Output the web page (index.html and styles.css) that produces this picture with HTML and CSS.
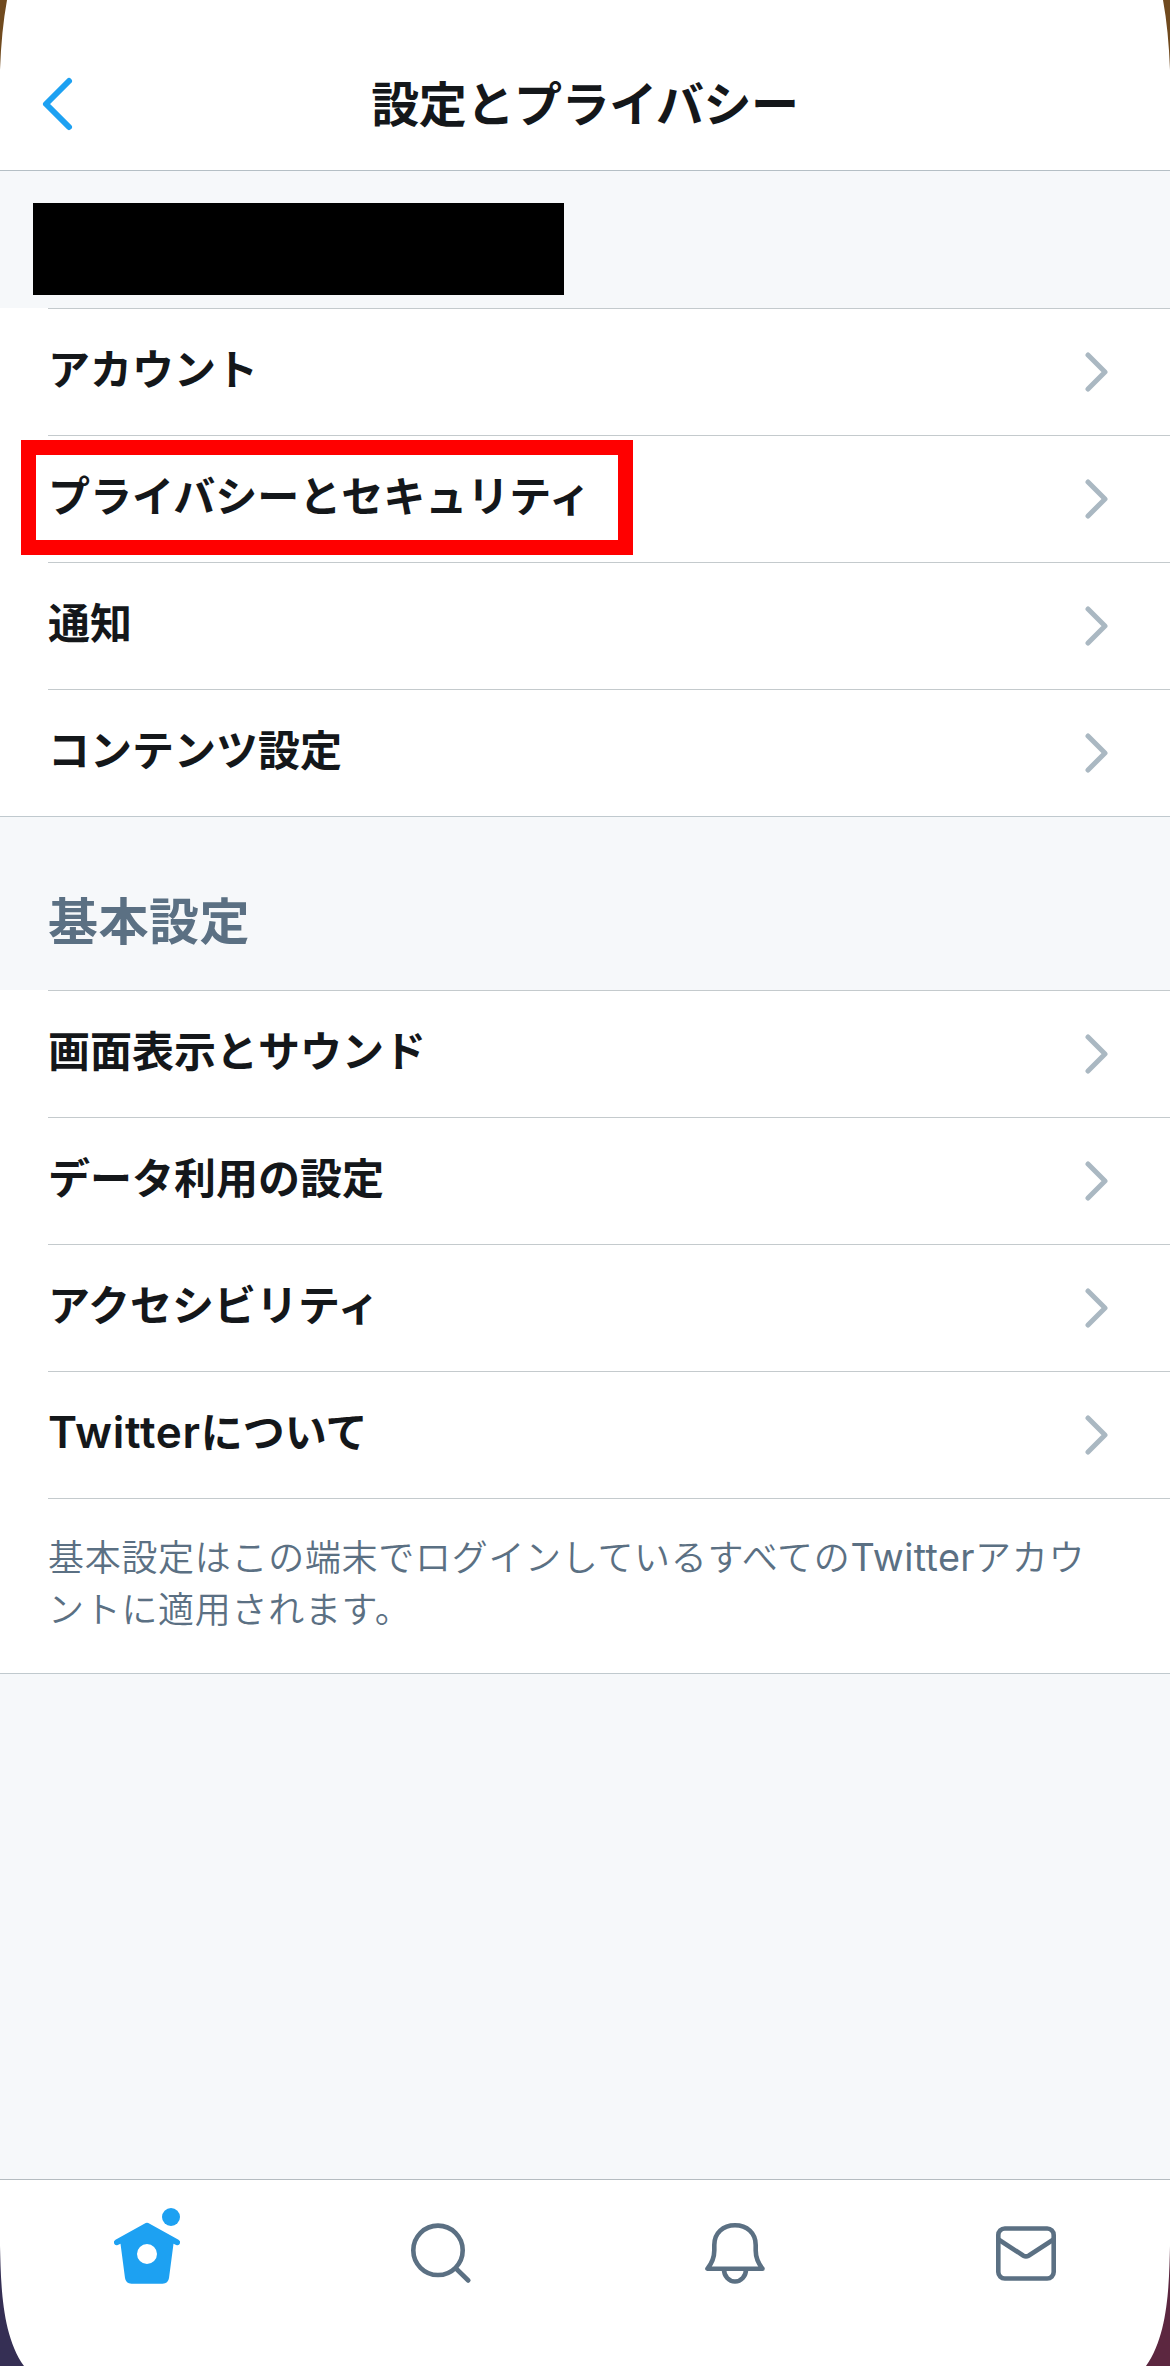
FILE: index.html
```html
<!DOCTYPE html>
<html lang="ja">
<head>
    <meta charset="UTF-8">
    <meta name="viewport" content="width=device-width, initial-scale=1.0">
    <title>設定とプライバシー</title>
    <link rel="stylesheet" href="styles.css">
</head>
<body>
    <header>
        <a href="#" class="back">
            <svg width="40" height="60" viewBox="0 0 40 60"><path d="M29 7L6 30L29 53"/></svg>
        </a>
        <h1>設定とプライバシー</h1>
    </header>

    <main>
        <div class="user"><div class="user-name"></div></div>
        <ul class="list">
            <li><a href="#"><span>アカウント</span><svg class="arrow" viewBox="0 0 24 40"><path d="M3 3L20 20L3 37"/></svg></a></li>
            <li><a href="#"><span class="marked">プライバシーとセキュリティ</span><svg class="arrow" viewBox="0 0 24 40"><path d="M3 3L20 20L3 37"/></svg></a></li>
            <li><a href="#"><span>通知</span><svg class="arrow" viewBox="0 0 24 40"><path d="M3 3L20 20L3 37"/></svg></a></li>
            <li><a href="#"><span>コンテンツ設定</span><svg class="arrow" viewBox="0 0 24 40"><path d="M3 3L20 20L3 37"/></svg></a></li>
        </ul>

        <h2>基本設定</h2>
        <ul class="list">
            <li><a href="#"><span>画面表示とサウンド</span><svg class="arrow" viewBox="0 0 24 40"><path d="M3 3L20 20L3 37"/></svg></a></li>
            <li><a href="#"><span>データ利用の設定</span><svg class="arrow" viewBox="0 0 24 40"><path d="M3 3L20 20L3 37"/></svg></a></li>
            <li><a href="#"><span>アクセシビリティ</span><svg class="arrow" viewBox="0 0 24 40"><path d="M3 3L20 20L3 37"/></svg></a></li>
            <li><a href="#"><span><span class="latin">Twitter</span>について</span><svg class="arrow" viewBox="0 0 24 40"><path d="M3 3L20 20L3 37"/></svg></a></li>
            <li class="note">基本設定はこの端末でログインしているすべての<span class="latin">Twitter</span>アカウ<br>ントに適用されます。</li>
        </ul>
    </main>

    <nav>
        <a href="#" class="active">
            <svg viewBox="0 0 80 80">
                <circle cx="64" cy="12" r="9"/>
                <path fill-rule="evenodd" d="M38.700 18.100Q40 17.300 41.300 18.100L71.500 34.800Q73.700 36.200 73 38.200Q72 40.800 69.200 39.900L66.500 38.700L62 73Q61.200 78.700 55.500 78.700H24.500Q18.800 78.700 18 73L13.500 38.700L10.800 39.900Q8 40.800 7 38.200Q6.300 36.200 8.500 34.800ZM40 39a10 10 0 1 0 0 20a10 10 0 1 0 0-20Z"/>
            </svg>
        </a>
        <a href="#">
            <svg viewBox="0 0 80 80"><circle cx="37" cy="45.300" r="24.700"/><path d="M55 63.500L67.300 75.500"/></svg>
        </a>
        <a href="#">
            <svg viewBox="0 0 80 80"><path d="M12.500 63.700H67.500C63 58 60.700 52.500 60.700 45.500V40C60.700 28 52 20.300 40 20.300S19.300 28 19.300 40V45.500C19.300 52.500 17 58 12.500 63.700ZM29 64.500a11 12 0 0 0 22 0"/></svg>
        </a>
        <a href="#">
            <svg viewBox="0 0 80 80"><rect x="9.300" y="23.500" width="55.400" height="50" rx="6.500"/><path d="M9.500 34.500L34.500 50.700Q37 52.200 39.500 50.700L64.500 34.500"/></svg>
        </a>
    </nav>

    <!-- wallpaper behind the rounded screen corners -->
    <svg class="corner top left" viewBox="0 0 30 150"><path d="M0 0H7Q1.500 30 0 70Z"/></svg>
    <svg class="corner top right" viewBox="0 0 30 150"><path d="M0 0H7Q1.500 30 0 70Z"/></svg>
    <svg class="corner bottom left" viewBox="0 0 30 150"><path d="M0 30C1 65 1 118 24 150H0Z"/></svg>
    <svg class="corner bottom right" viewBox="0 0 30 150"><path d="M0 30C1 65 1 118 24 150H0Z"/></svg>
</body>
</html>
```

FILE: styles.css
```css
html, body {
    height: 100%;
    margin: 0;
    overflow: hidden;
}
body {
    position: relative;
    display: flex;
    flex-direction: column;
    background-color: #f6f8fa;
    color: #14171a;
    font-family: 'Noto Sans CJK JP', sans-serif;
}
a {
    color: inherit;
    text-decoration: none;
}
svg {
    display: block;
    fill: none;
    stroke-linecap: round;
    stroke-linejoin: round;
}
header {
    display: grid;
    grid-template-columns: 120px 1fr 120px;
    align-items: center;
    box-sizing: border-box;
    height: 171px;
    padding-top: 38px;
    background-color: #fff;
    border-bottom: 1px solid #b5bfc5;
}
.back {
    padding-left: 40px;
}
.back svg {
    stroke: #1da1f2;
    stroke-width: 6;
}
h1 {
    margin: 0 0 6px;
    text-align: center;
    font-size: 48px;
    line-height: 60px;
    letter-spacing: -0.4px;
}
main {
    flex: 1;
}
.user {
    box-sizing: border-box;
    height: 137px;
    padding: 32px 33px 0;
}
.user-name {
    width: 531px;
    height: 92px;
    background-color: #000;
}
.list {
    list-style: none;
    margin: 0;
    padding: 0 0 0 48px;
    background-color: #fff;
    border-bottom: 1px solid #c0c9ce;
}
.list li {
    border-top: 1px solid #c4cacd;
}
.list a {
    display: flex;
    justify-content: space-between;
    align-items: center;
    height: 126px;
    padding-right: 61px;
    font-size: 42px;
    font-weight: bold;
}
.list a > span {
    position: relative;
    line-height: 60px;
    margin-bottom: 10px;
}
.arrow {
    width: 24px;
    height: 40px;
    stroke: #aab8c2;
    stroke-width: 5;
}
/* red frame around the row to tap */
.marked::after {
    content: "";
    position: absolute;
    left: -27px;
    top: -24px;
    width: 582px;
    height: 85px;
    border: 15px solid #f00;
}
h2 {
    box-sizing: border-box;
    height: 173px;
    margin: 0;
    padding: 71px 48px 0;
    color: #5b7083;
    font-size: 50px;
    line-height: 60px;
    letter-spacing: 0.5px;
}
.latin {
    font-family: 'Inter', sans-serif;
    font-size: 1.05em;
    font-weight: 600;
    line-height: 0;
    letter-spacing: 0.7px;
}
.list .note {
    box-sizing: border-box;
    height: 175px;
    padding-top: 30px;
    color: #5b7083;
    font-size: 36px;
    font-weight: 350;
    line-height: 52px;
    letter-spacing: 0.7px;
    white-space: nowrap;
}
.note .latin {
    font-weight: 400;
    letter-spacing: 0.4px;
}
nav {
    display: grid;
    grid-template-columns: repeat(4, 294px);
    box-sizing: border-box;
    height: 187px;
    padding-top: 25px;
    background-color: #fff;
    border-top: 1px solid #b5bcc1;
    overflow: hidden;
}
nav svg {
    width: 80px;
    height: 80px;
    margin: 0 auto;
    stroke: #5b7083;
    stroke-width: 4.6;
}
nav .active svg {
    fill: #1da1f2;
    stroke: none;
}
.corner {
    position: absolute;
    width: 30px;
    height: 150px;
}
.top {
    top: 0;
    fill: #704a1e;
}
.bottom {
    bottom: 0;
    fill: #352f54;
}
.left {
    left: 0;
}
.right {
    right: 0;
    transform: scaleX(-1);
}
.bottom.right {
    fill: #5c2740;
}
```
